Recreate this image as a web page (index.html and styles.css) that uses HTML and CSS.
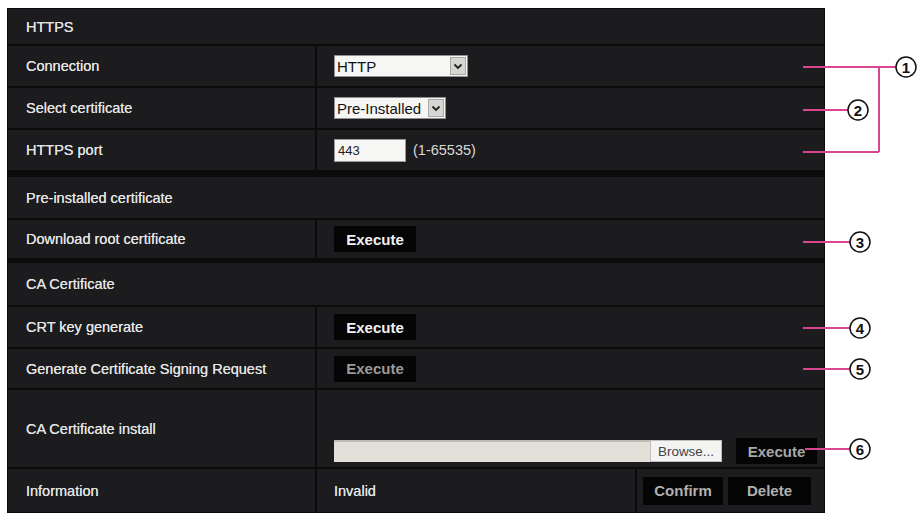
FILE: index.html
```html
<!DOCTYPE html>
<html>
<head>
<meta charset="utf-8">
<link rel="stylesheet" href="styles.css">
</head>
<body>
<div class="panel">
  <div class="row head h35"><div class="label">HTTPS</div></div>
  <div class="row h40">
    <div class="label">Connection</div>
    <div class="value">
      <div class="select w134"><span class="sel-text">HTTP</span><span class="sel-btn"><svg width="10" height="7" viewBox="0 0 10 7"><path d="M1.5 1.5 L5 5 L8.5 1.5" fill="none" stroke="#222" stroke-width="1.8"/></svg></span></div>
    </div>
  </div>
  <div class="row h40">
    <div class="label">Select certificate</div>
    <div class="value">
      <div class="select w112"><span class="sel-text">Pre-Installed</span><span class="sel-btn"><svg width="10" height="7" viewBox="0 0 10 7"><path d="M1.5 1.5 L5 5 L8.5 1.5" fill="none" stroke="#222" stroke-width="1.8"/></svg></span></div>
    </div>
  </div>
  <div class="row h40">
    <div class="label">HTTPS port</div>
    <div class="value">
      <div class="input">443</div><span class="range">(1-65535)</span>
    </div>
  </div>
  <div class="row head h41 brk7"><div class="label">Pre-installed certificate</div></div>
  <div class="row h38">
    <div class="label">Download root certificate</div>
    <div class="value"><span class="btn">Execute</span></div>
  </div>
  <div class="row head h42 brk5"><div class="label">CA Certificate</div></div>
  <div class="row h40">
    <div class="label">CRT key generate</div>
    <div class="value"><span class="btn">Execute</span></div>
  </div>
  <div class="row h39">
    <div class="label">Generate Certificate Signing Request</div>
    <div class="value"><span class="btn off">Execute</span></div>
  </div>
  <div class="row h77">
    <div class="label">CA Certificate install</div>
    <div class="value bottom">
      <div class="file"><span class="file-field"></span><span class="browse">Browse...</span></div>
      <span class="btn off wide">Execute</span>
    </div>
  </div>
  <div class="row h43">
    <div class="label">Information</div>
    <div class="value split">
      <div class="sub status">Invalid</div>
      <div class="sub actions"><span class="btn off b80">Confirm</span><span class="btn off b83">Delete</span></div>
    </div>
  </div>
</div>

<svg class="callouts" width="920" height="517" viewBox="0 0 920 517">
  <g fill="none" stroke="#d94690" stroke-width="2">
    <path d="M803 67 H896"/>
    <path d="M879 67 V152"/>
    <path d="M803 152 H879"/>
    <path d="M803 110 H848"/>
    <path d="M803 242 H850"/>
    <path d="M803 328 H850"/>
    <path d="M803 369 H850"/>
    <path d="M805 449 H850"/>
  </g>
  <g fill="#fff" stroke="#111" stroke-width="1.5">
    <circle cx="906" cy="67" r="10"/>
    <circle cx="858" cy="110" r="10"/>
    <circle cx="860" cy="242" r="10"/>
    <circle cx="860" cy="328" r="10"/>
    <circle cx="860" cy="369" r="10"/>
    <circle cx="860" cy="449" r="10"/>
  </g>
  <g class="num" text-anchor="middle">
    <text x="906" y="72.5">1</text>
    <text x="858" y="115.5">2</text>
    <text x="860" y="247.5">3</text>
    <text x="860" y="333.5">4</text>
    <text x="860" y="374.5">5</text>
    <text x="860" y="454.5">6</text>
  </g>
</svg>
</body>
</html>
```
FILE: styles.css
```css
html, body {
  margin: 0;
  padding: 0;
  background: #ffffff;
}
body {
  width: 920px;
  height: 517px;
  position: relative;
  overflow: hidden;
  font-family: "Liberation Sans", Arial, sans-serif;
}
.panel {
  position: absolute;
  left: 7px;
  top: 8px;
  width: 816px;
  padding: 1px;
  background: #0b0b0c;
  display: flex;
  flex-direction: column;
  gap: 2px;
}
.row {
  display: flex;
  gap: 2px;
}
.row.head {
  background: #1c1c1e;
}
.h35 { height: 35px; }
.h38 { height: 38px; }
.h39 { height: 39px; }
.h40 { height: 40px; }
.h41 { height: 41px; }
.h42 { height: 42px; }
.h43 { height: 43px; }
.h77 { height: 77px; }
.brk7 { margin-top: 5px; }
.brk5 { margin-top: 3px; }

.label {
  width: 307px;
  flex: none;
  box-sizing: border-box;
  padding-left: 18px;
  display: flex;
  align-items: center;
  background: #1c1c1e;
  color: #e4e4e4;
  font-size: 14.5px;
  text-shadow: 0 0 0.6px #e4e4e4;
}
.row.head .label {
  background: transparent;
  width: auto;
}
.value {
  flex: 1;
  background: #1c1c1e;
  display: flex;
  align-items: center;
  padding-left: 17px;
}
.value.bottom {
  align-items: flex-end;
  padding-bottom: 4px;
  box-sizing: border-box;
}
.value.split {
  padding-left: 0;
  background: transparent;
  gap: 2px;
  align-items: stretch;
}
.sub {
  background: #1c1c1e;
  display: flex;
  align-items: center;
}
.status {
  width: 318px;
  padding-left: 17px;
  box-sizing: border-box;
  color: #e4e4e4;
  font-size: 14.5px;
  text-shadow: 0 0 0.6px #e4e4e4;
}
.actions {
  flex: 1;
  padding-left: 6px;
  gap: 5px;
}

.select {
  height: 22px;
  box-sizing: border-box;
  border: 1px solid #8f8f8f;
  background: #f6f6f4;
  display: flex;
  align-items: center;
  justify-content: space-between;
}
.w134 { width: 134px; }
.w112 { width: 112px; }
.sel-text {
  color: #111;
  font-size: 15px;
  padding-left: 2px;
}
.sel-btn {
  width: 16px;
  height: 18px;
  margin-right: 1px;
  background: #d6d6d2;
  border: 1px solid #a8a8a8;
  box-sizing: border-box;
  display: flex;
  align-items: center;
  justify-content: center;
}
.input {
  width: 72px;
  height: 23px;
  box-sizing: border-box;
  background: #f6f6f4;
  border: 1px solid #9a9a9a;
  color: #222;
  font-size: 13px;
  padding-left: 3px;
  display: flex;
  align-items: center;
}
.range {
  color: #d8d8d8;
  font-size: 14.5px;
  margin-left: 7px;
}
.btn {
  width: 82px;
  height: 26px;
  background: #050505;
  color: #f2f2f2;
  font-weight: bold;
  font-size: 15px;
  display: flex;
  align-items: center;
  justify-content: center;
  flex: none;
}
.btn.off {
  color: #9a9a9a;
}
.btn.wide {
  width: 81px;
  margin-left: 14px;
  margin-bottom: -1px;
  color: #a8a8a8;
}
.btn.b80 { width: 80px; height: 28px; color: #b0b0b0; }
.btn.b83 { width: 83px; height: 28px; color: #b0b0b0; }
.file {
  width: 388px;
  height: 22px;
  display: flex;
  margin-bottom: 1px;
}
.file-field {
  flex: 1;
  background: #e2e0d8;
  border-top: 2px solid #bdbbb3;
}
.browse {
  width: 72px;
  background: #f3f3f1;
  border: 1px solid #bdbdbd;
  box-sizing: border-box;
  color: #444;
  font-size: 13.4px;
  display: flex;
  align-items: center;
  justify-content: center;
}
.callouts {
  position: absolute;
  left: 0;
  top: 0;
  pointer-events: none;
}
.num text {
  font-family: "Liberation Sans", Arial, sans-serif;
  font-size: 15px;
  font-weight: bold;
  fill: #111;
}
```
